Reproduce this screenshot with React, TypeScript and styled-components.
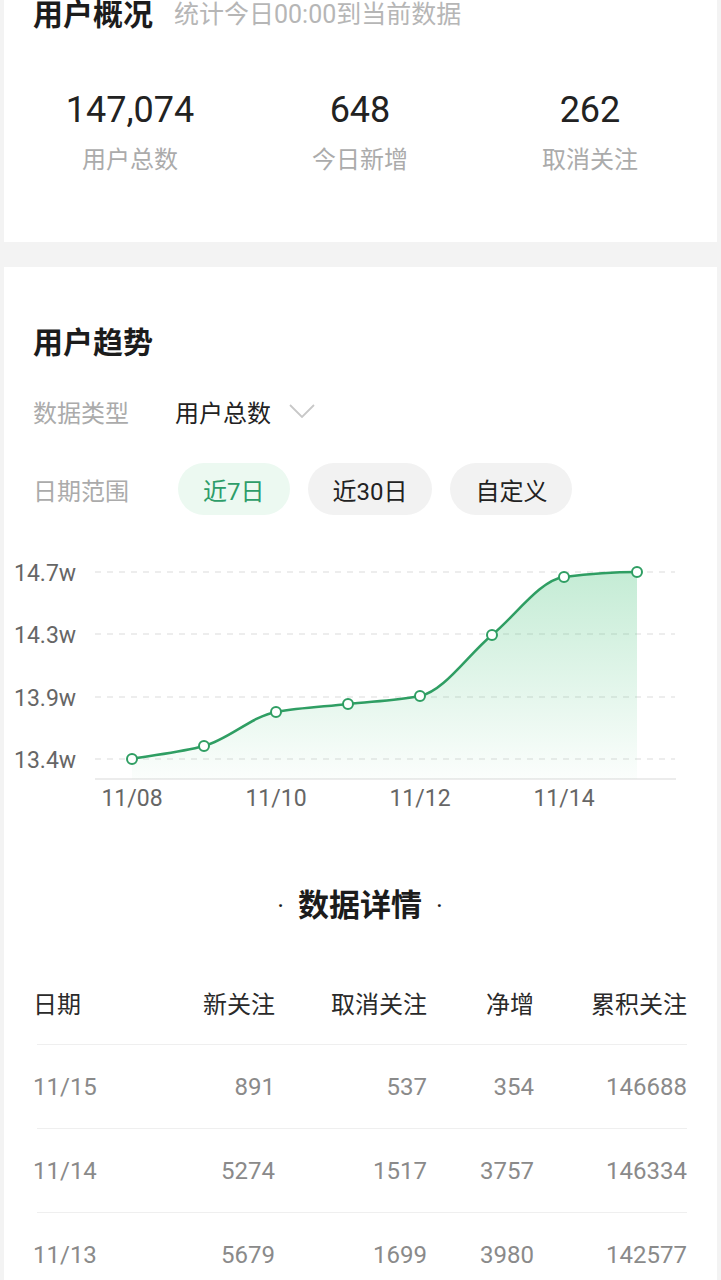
import React from 'react';
import styled, { createGlobalStyle } from 'styled-components';

const GlobalStyle = createGlobalStyle`
  html, body {
    margin: 0;
    padding: 0;
    background: #f3f3f3;
  }
  body {
    font-family: Roboto, "Noto Sans CJK SC", sans-serif;
    color: #222;
  }
`

const AppColors = {
  GREEN: '#2f9e63',
  GREEN_TEXT: '#2e9d69',
  PILL_GREEN: '#ecf9f1',
  PILL_GRAY: '#f2f2f2',
  MUTED: '#ababab',
  GRID: '#e8e8e8',
  AXIS_TEXT: '#666666',
}

const Page = styled.div`
  width: 721px;
  display: flex;
  flex-direction: column;
  gap: 25px;
  overflow: hidden;
`

const Card = styled.section<{ $top: number; $bottom: number }>`
  margin: 0 4px;
  background: #fff;
  padding: ${ p => p.$top }px 30px ${ p => p.$bottom }px 29px;
  display: flex;
  flex-direction: column;
`

const TitleRow = styled.div`
  display: flex;
  align-items: center;
  gap: 21px;
  height: 30px;
`

const Title = styled.h2`
  margin: 0;
  font-size: 30px;
  line-height: 30px;
  height: 30px;
  font-weight: 700;
  color: #1c1c1c;
`

const SubTitle = styled.span`
  font-size: 25px;
  line-height: 30px;
  color: #b6b6b6;
`

const StatsRow = styled.div`
  margin-top: 58px;
  display: grid;
  grid-template-columns: repeat(3, 230px);
  margin-left: -18px;
`

const Stat = styled.div`
  display: flex;
  flex-direction: column;
  align-items: center;
  gap: 12px;
`

const StatValue = styled.div`
  font-size: 36px;
  line-height: 44px;
  color: #222;
`

const StatLabel = styled.div`
  font-size: 24px;
  line-height: 32px;
  color: ${ AppColors.MUTED };
`

const FilterRow = styled.div<{ $first?: boolean }>`
  display: flex;
  align-items: center;
  height: 52px;
  margin-top: ${ p => p.$first ? 27 : 26 }px;
`

const FilterLabel = styled.div`
  width: 142px;
  font-size: 24px;
  color: ${ AppColors.MUTED };
`

const SelectValue = styled.div`
  display: flex;
  align-items: center;
  gap: 18px;
  font-size: 24px;
  color: #222;
`

const Pills = styled.div`
  display: flex;
  gap: 18px;
  margin-left: 3px;
`

const Pill = styled.div<{ $active?: boolean }>`
  height: 52px;
  padding: 0 25px;
  border-radius: 26px;
  display: flex;
  align-items: center;
  font-size: 24px;
  background: ${ p => p.$active ? AppColors.PILL_GREEN : AppColors.PILL_GRAY };
  color: ${ p => p.$active ? AppColors.GREEN_TEXT : '#222' };
`

const ChartBox = styled.div`
  margin: 15px -30px 0 -29px;
  height: 290px;

  svg {
    display: block;
  }
`

const SectionTitle = styled.div`
  margin-top: 66px;
  height: 40px;
  display: flex;
  justify-content: center;
  align-items: center;
  gap: 14px;
  font-size: 31px;
  line-height: 40px;
  font-weight: 700;
  color: #1c1c1c;
`

const Dot = styled.span`
  font-weight: 400;
  font-size: 26px;
`

const Table = styled.div`
  margin-top: 35px;
  display: flex;
  flex-direction: column;
`

const TableRow = styled.div<{ $head?: boolean }>`
  box-sizing: border-box;
  display: grid;
  grid-template-columns: 118px 120px 152px 107px 153px;
  height: 84px;
  align-items: center;
  border-bottom: 1px solid #efefef;
  margin-left: 4px;
  font-size: 24px;
  color: ${ p => p.$head ? '#2a2a2a' : '#8a8a8a' };
`

const Cell = styled.div<{ $left?: boolean }>`
  text-align: ${ p => p.$left ? 'left' : 'right' };
  margin-left: ${ p => p.$left ? '-4px' : '0' };
`

type Pt = [number, number]

const points: Pt[] = [
  [132, 759], [204, 746], [276, 712], [348, 704],
  [420, 696], [492, 635], [564, 577], [637, 572],
]

const monotonePath = (pts: Pt[]) => {
  const n = pts.length;
  const s: number[] = [];
  for (let i = 0; i < n - 1; i++) {
    s.push((pts[i + 1][1] - pts[i][1]) / (pts[i + 1][0] - pts[i][0]));
  }
  const m: number[] = [];
  for (let i = 0; i < n; i++) {
    if (i === 0) m.push(s[0]);
    else if (i === n - 1) m.push(0);
    else if (s[i - 1] * s[i] <= 0) m.push(0);
    else {
      const a = s[i - 1], b = s[i];
      m.push((2 * a * b) / (a + b));
    }
  }
  let d = `M${ pts[0][0] },${ pts[0][1] }`;
  for (let i = 0; i < n - 1; i++) {
    const [x0, y0] = pts[i];
    const [x1, y1] = pts[i + 1];
    const h = (x1 - x0) / 3;
    d += ` C${ x0 + h },${ y0 + m[i] * h } ${ x1 - h },${ y1 - m[i + 1] * h } ${ x1 },${ y1 }`;
  }
  return d;
}

const gridLines = [
  { y: 572, label: '14.7w' },
  { y: 634, label: '14.3w' },
  { y: 697, label: '13.9w' },
  { y: 759, label: '13.4w' },
]

const xLabels = [
  { x: 132, label: '11/08' },
  { x: 276, label: '11/10' },
  { x: 420, label: '11/12' },
  { x: 564, label: '11/14' },
]

// chart drawn in page coordinates, the viewBox maps them onto the card
const TrendChart = () => {
  const line = monotonePath(points);
  const last = points[points.length - 1];
  const area = `${ line } L${ last[0] },779 L${ points[0][0] },779 Z`;

  return (
    <svg width={ 713 } height={ 290 } viewBox="4 530 713 290">
      <defs>
        <linearGradient id="trendFill" x1="0" y1="0" x2="0" y2="1">
          <stop offset="0%" stopColor="#3cbf73" stopOpacity={ 0.3 }/>
          <stop offset="100%" stopColor="#3cbf73" stopOpacity={ 0.02 }/>
        </linearGradient>
      </defs>
      { gridLines.map(g => (
        <g key={ g.label }>
          <line x1={ 95 } x2={ 675 } y1={ g.y } y2={ g.y } stroke={ AppColors.GRID } strokeWidth={ 1.5 }
                strokeDasharray="6 6"/>
          <text x={ 14 } y={ g.y + 8.5 } fontSize={ 23 } fill={ AppColors.AXIS_TEXT }
                fontFamily="Roboto, sans-serif">{ g.label }</text>
        </g>
      )) }
      <line x1={ 95 } x2={ 676 } y1={ 779 } y2={ 779 } stroke="#ececec" strokeWidth={ 2 }/>
      <path d={ area } fill="url(#trendFill)"/>
      <path d={ line } fill="none" stroke={ AppColors.GREEN } strokeWidth={ 2.5 }/>
      { points.map(([x, y]) => (
        <circle key={ x } cx={ x } cy={ y } r={ 5 } fill="#fff" stroke={ AppColors.GREEN } strokeWidth={ 2 }/>
      )) }
      { xLabels.map(l => (
        <text key={ l.label } x={ l.x } y={ 806 } fontSize={ 23 } fill={ AppColors.AXIS_TEXT } textAnchor="middle"
              fontFamily="Roboto, sans-serif">{ l.label }</text>
      )) }
    </svg>
  )
}

const stats = [
  { value: '147,074', label: '用户总数' },
  { value: '648', label: '今日新增' },
  { value: '262', label: '取消关注' },
]

const rows = [
  ['11/15', '891', '537', '354', '146688'],
  ['11/14', '5274', '1517', '3757', '146334'],
  ['11/13', '5679', '1699', '3980', '142577'],
]

const App = () => {
  return (
    <Page>
      <GlobalStyle/>
      <Card $top={ 0 } $bottom={ 66 }>
        <TitleRow>
          <Title>用户概况</Title>
          <SubTitle>统计今日00:00到当前数据</SubTitle>
        </TitleRow>
        <StatsRow>
          { stats.map(s => (
            <Stat key={ s.label }>
              <StatValue>{ s.value }</StatValue>
              <StatLabel>{ s.label }</StatLabel>
            </Stat>
          )) }
        </StatsRow>
      </Card>

      <Card $top={ 61 } $bottom={ 40 }>
        <Title>用户趋势</Title>
        <FilterRow $first>
          <FilterLabel>数据类型</FilterLabel>
          <SelectValue>
            用户总数
            <svg width={ 26 } height={ 14 } viewBox="0 0 26 14">
              <polyline points="1,1 13,13 25,1" fill="none" stroke="#c8c8c8" strokeWidth={ 1.8 }/>
            </svg>
          </SelectValue>
        </FilterRow>
        <FilterRow>
          <FilterLabel>日期范围</FilterLabel>
          <Pills>
            <Pill $active>近7日</Pill>
            <Pill>近30日</Pill>
            <Pill>自定义</Pill>
          </Pills>
        </FilterRow>
        <ChartBox>
          <TrendChart/>
        </ChartBox>

        <SectionTitle>
          <Dot>·</Dot>
          <span>数据详情</span>
          <Dot>·</Dot>
        </SectionTitle>

        <Table>
          <TableRow $head>
            <Cell $left>日期</Cell>
            <Cell>新关注</Cell>
            <Cell>取消关注</Cell>
            <Cell>净增</Cell>
            <Cell>累积关注</Cell>
          </TableRow>
          { rows.map(r => (
            <TableRow key={ r[0] }>
              <Cell $left>{ r[0] }</Cell>
              { r.slice(1).map((v, i) => <Cell key={ i }>{ v }</Cell>) }
            </TableRow>
          )) }
        </Table>
      </Card>
    </Page>
  );
};

export default App;
